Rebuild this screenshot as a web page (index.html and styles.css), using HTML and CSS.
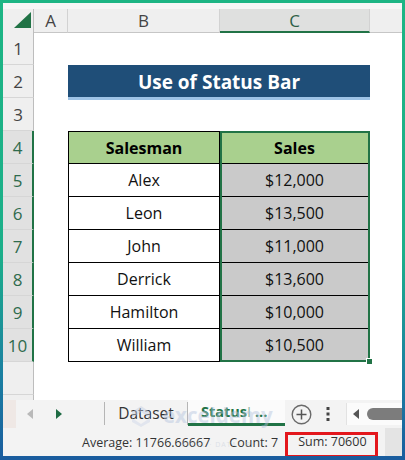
FILE: index.html
```html
<!DOCTYPE html>
<html>
<head>
<meta charset="utf-8">
<link rel="stylesheet" href="styles.css">
</head>
<body>
<div class="frame">
  <div class="app">
    <div class="colhdr">
      <div class="corner">
        <svg class="corner-tri" width="31" height="23" viewBox="0 0 31 23"><polygon points="11,19 28,19 28,3" fill="#217346"/></svg>
      </div>
      <div class="ch">A</div>
      <div class="ch">B</div>
      <div class="ch sel">C</div>
      <div class="ch rest"></div>
    </div>

    <div class="sheet">
      <div class="rh">1</div>
      <div class="rh">2</div>
      <div class="rh">3</div>
      <div class="rh sel">4</div>
      <div class="rh sel">5</div>
      <div class="rh sel">6</div>
      <div class="rh sel">7</div>
      <div class="rh sel">8</div>
      <div class="rh sel">9</div>
      <div class="rh sel">10</div>
      <div class="rh"></div>
      <div class="rh"></div>

      <div class="title">Use of Status Bar</div>

      <div class="tbl">
        <div class="c h">Salesman</div><div class="c h">Sales</div>
        <div class="c">Alex</div><div class="c v">$12,000</div>
        <div class="c">Leon</div><div class="c v">$13,500</div>
        <div class="c">John</div><div class="c v">$11,000</div>
        <div class="c">Derrick</div><div class="c v">$13,600</div>
        <div class="c">Hamilton</div><div class="c v">$10,000</div>
        <div class="c">William</div><div class="c v">$10,500</div>
      </div>

      <div class="selbox"><div class="handle"></div></div>
    </div>

    <div class="tabbar">
      <div class="pink"></div>
      <div class="nav">
        <svg width="6" height="10" viewBox="0 0 6 10"><polygon points="6,0 6,10 0,5" fill="#b9b9b9"/></svg>
        <svg width="6" height="10" viewBox="0 0 6 10"><polygon points="0,0 0,10 6,5" fill="#1e6b43"/></svg>
      </div>
      <div class="tab ds">Dataset</div>
      <div class="tab act">Status <span class="fade">I</span>&nbsp;...</div>
      <svg class="plus" width="21" height="21" viewBox="0 0 21 21"><circle cx="10.5" cy="10.5" r="9.3" fill="none" stroke="#6a6a6a" stroke-width="1.4"/><path d="M10.5 5.5v10M5.5 10.5h10" stroke="#555" stroke-width="1.5"/></svg>
      <svg class="more" width="4" height="14" viewBox="0 0 4 14"><rect x="0.5" y="0" width="3" height="3" fill="#444"/><rect x="0.5" y="5.5" width="3" height="3" fill="#444"/><rect x="0.5" y="11" width="3" height="3" fill="#444"/></svg>
      <div class="scroll">
        <svg width="6" height="10" viewBox="0 0 6 10"><polygon points="6,0 6,10 0,5" fill="#555"/></svg>
        <div class="thumb"></div>
      </div>
    </div>

    <div class="status">
      <span class="avg">Average: 11766.66667</span>
      <span class="count">Count: 7</span>
      <div class="sum"><span>Sum: 70600</span></div>
      <div class="views"></div>
    </div>

    <div class="wm">
      <svg width="22" height="24" viewBox="0 0 22 24"><polygon points="2,8 11,2 20,8 20,14 11,8 2,14" fill="#c3cee2"/><polygon points="2,14 11,20 20,14 20,18 11,23 2,18" fill="#cdd6e8"/></svg>
      <div class="wm-text">
        <span class="wm-name">exceldemy</span>
        <span class="wm-sub">EXCEL · DATA · BI</span>
      </div>
    </div>
  </div>
</div>
</body>
</html>
```
FILE: styles.css
```css
* { box-sizing: border-box; }
html, body { margin: 0; padding: 0; }
body { font-family: "Open Sans", "Noto Sans", sans-serif; }

.frame {
  width: 405px;
  height: 460px;
  padding: 3px 3px 4px 3px;
  background: linear-gradient(to bottom, #1db584 0%, #1caf8a 55%, #1b7fa2 82%, #1a5c9e 100%);
}
.app {
  position: relative;
  height: 453px;
  background: #fff;
  display: flex;
  flex-direction: column;
  overflow: hidden;
}

/* column headers */
.colhdr {
  flex: none;
  height: 29px;
  padding-top: 6px;
  background: #f6f6f6;
  display: grid;
  grid-template-columns: 31px 34px 152px 150px 1fr;
}
.corner {
  background: #efefef;
  border-right: 1px solid #bfbfbf;
  border-bottom: 1px solid #c6c6c6;
}
.corner-tri { display: block; }
.ch {
  display: flex;
  align-items: center;
  justify-content: center;
  font-size: 17px;
  line-height: 1;
  color: #444;
  background: #efefef;
  border-right: 1px solid #d2d2d2;
  border-bottom: 1px solid #c6c6c6;
}
.ch.sel {
  background: #dfe0df;
  color: #2e5f47;
  border-bottom: 2px solid #217346;
}
.ch.rest { border-right: none; }

/* sheet */
.sheet {
  flex: none;
  height: 368px;
  display: grid;
  grid-template-columns: 31px 34px 152px 150px 1fr;
  grid-template-rows: repeat(12, 33px);
  overflow: hidden;
}
.rh {
  grid-column: 1;
  display: flex;
  align-items: center;
  justify-content: center;
  font-size: 17px;
  color: #444;
  background: #efefef;
  border-bottom: 1px solid #d6d6d6;
  border-right: 1px solid #bdbdbd;
}
.rh.sel {
  background: #e1e1e1;
  color: #2f6b4d;
  border-right: 2px solid #217346;
}

.title {
  grid-column: 3 / 5;
  grid-row: 2;
  height: 35px;
  background: #1f4e78;
  border-bottom: 3px solid #9dc3e6;
  color: #fff;
  font-weight: 700;
  font-size: 19px;
  display: flex;
  align-items: center;
  justify-content: center;
  padding-top: 1px;
}

.tbl {
  grid-column: 3 / 5;
  grid-row: 4 / 11;
  display: grid;
  grid-template-columns: 151px 150px;
  grid-template-rows: 32px repeat(6, 33px);
  border-left: 1px solid #000;
  border-top: 1px solid #000;
}
.c {
  display: flex;
  align-items: center;
  justify-content: center;
  font-size: 16px;
  color: #111;
  border-right: 1px solid #000;
  border-bottom: 1px solid #000;
}
.c.h {
  background: #a9d08e;
  font-weight: 700;
  color: #000;
}
.c.v { background: #cacaca; }

.selbox {
  grid-column: 4;
  grid-row: 4 / 11;
  position: relative;
  border: 2px solid #217346;
}
.handle {
  position: absolute;
  right: -5px;
  bottom: -5px;
  width: 7px;
  height: 7px;
  background: #217346;
  border: 1px solid #fff;
}

/* sheet tabs */
.tabbar {
  flex: none;
  height: 28px;
  display: flex;
  align-items: center;
  background: #f3f3f3;
  font-size: 15.5px;
  color: #333;
}
.pink {
  width: 13px;
  align-self: stretch;
  background: #efe8e5;
}
.nav {
  width: 88px;
  display: flex;
  align-items: center;
  padding-left: 11px;
  gap: 23px;
}
.tab {
  align-self: stretch;
  display: flex;
  align-items: center;
}
.tab.ds {
  width: 84px;
  justify-content: center;
  margin: 2px 0 3px 0;
  border-left: 1px solid #b5b5b5;
  border-right: 1px solid #b5b5b5;
  padding-bottom: 2px;
}
.tab.act {
  width: 97px;
  padding-left: 13px;
  padding-bottom: 1px;
  background: #fbfbfb;
  color: #217346;
  font-weight: 700;
  font-size: 14.5px;
  border-bottom: 3px solid #217346;
  margin-bottom: 2px;
  white-space: nowrap;
}
.fade { color: #8fb8a2; font-weight: 400; }
.plus { margin-left: 6px; flex: none; }
.more { margin-left: 14px; flex: none; }
.scroll {
  margin-left: auto;
  width: 56px;
  align-self: stretch;
  margin-top: 3px;
  margin-bottom: 3px;
  background: #fbfbfb;
  border-left: 1px solid #e2e2e2;
  display: flex;
  align-items: center;
  padding-left: 6px;
  gap: 8px;
}
.thumb {
  flex: 1;
  height: 12px;
  border-radius: 6px 0 0 6px;
  background: #7c7c7c;
}

/* status bar */
.status {
  flex: none;
  height: 28px;
  display: flex;
  align-items: center;
  background: #f3f3f3;
  font-size: 12.5px;
  color: #333;
  overflow: hidden;
  white-space: nowrap;
}
.avg { margin-left: 79px; }
.count { margin-left: 19px; }
.sum {
  align-self: flex-start;
  margin-top: 4px;
  margin-left: 7px;
  width: 93px;
  height: 26px;
  border: 3px solid #e3171c;
  padding-left: 10px;
  line-height: 13px;
  padding-top: 0;
}
.views {
  margin-left: auto;
  width: 17px;
  align-self: stretch;
  background: #e4e4e4;
}

/* watermark overlay */
.wm {
  position: absolute;
  left: 127px;
  top: 399px;
  display: flex;
  align-items: flex-start;
  gap: 11px;
  opacity: 0.45;
  pointer-events: none;
}
.wm svg { margin-top: 2px; }
.wm-text {
  display: flex;
  flex-direction: column;
  align-items: center;
}
.wm-name {
  font-size: 20.5px;
  font-weight: 700;
  line-height: 26px;
  color: #b4c3de;
}
.wm-sub {
  margin-top: 12px;
  font-size: 7px;
  letter-spacing: 1px;
  color: #c2cad8;
}
```
